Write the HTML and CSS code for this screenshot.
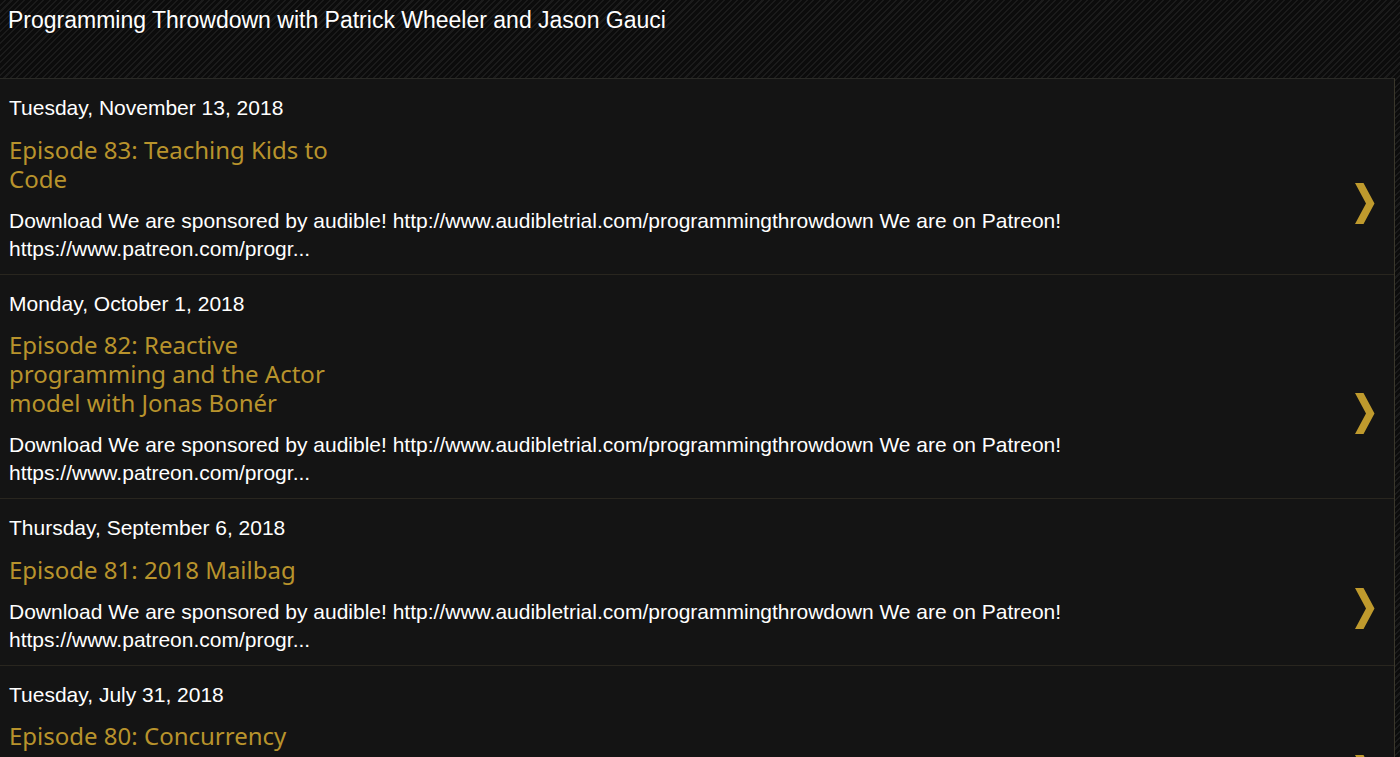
FILE: index.html
```html
<!DOCTYPE html>
<html lang="en">
<head>
<meta charset="utf-8">
<title>Programming Throwdown</title>
<link rel="stylesheet" href="styles.css">
</head>
<body>
<header class="site-header">
  <h1 class="site-title">Programming Throwdown with Patrick Wheeler and Jason Gauci</h1>
</header>
<main class="panel">
  <article class="episode">
    <div class="episode-body">
      <div class="episode-date">Tuesday, November 13, 2018</div>
      <h2 class="episode-title">Episode 83: Teaching Kids to Code</h2>
      <p class="episode-desc">Download We are sponsored by audible! http://www.audibletrial.com/programmingthrowdown We are on Patreon! https://www.patreon.com/progr...</p>
    </div>
    <div class="chevron"><svg width="20" height="41" viewBox="0 0 20 41"><polygon points="0,0 8.5,0 19.5,20.5 8.5,41 0,41 11,20.5" fill="#bf9a2d"/></svg></div>
  </article>
  <article class="episode">
    <div class="episode-body">
      <div class="episode-date">Monday, October 1, 2018</div>
      <h2 class="episode-title">Episode 82: Reactive programming and the Actor model with Jonas Bonér</h2>
      <p class="episode-desc">Download We are sponsored by audible! http://www.audibletrial.com/programmingthrowdown We are on Patreon! https://www.patreon.com/progr...</p>
    </div>
    <div class="chevron"><svg width="20" height="41" viewBox="0 0 20 41"><polygon points="0,0 8.5,0 19.5,20.5 8.5,41 0,41 11,20.5" fill="#bf9a2d"/></svg></div>
  </article>
  <article class="episode">
    <div class="episode-body">
      <div class="episode-date">Thursday, September 6, 2018</div>
      <h2 class="episode-title">Episode 81: 2018 Mailbag</h2>
      <p class="episode-desc">Download We are sponsored by audible! http://www.audibletrial.com/programmingthrowdown We are on Patreon! https://www.patreon.com/progr...</p>
    </div>
    <div class="chevron"><svg width="20" height="41" viewBox="0 0 20 41"><polygon points="0,0 8.5,0 19.5,20.5 8.5,41 0,41 11,20.5" fill="#bf9a2d"/></svg></div>
  </article>
  <article class="episode">
    <div class="episode-body">
      <div class="episode-date">Tuesday, July 31, 2018</div>
      <h2 class="episode-title">Episode 80: Concurrency</h2>
      <p class="episode-desc">Download We are sponsored by audible! http://www.audibletrial.com/programmingthrowdown We are on Patreon! https://www.patreon.com/progr...</p>
    </div>
    <div class="chevron"><svg width="20" height="41" viewBox="0 0 20 41"><polygon points="0,0 8.5,0 19.5,20.5 8.5,41 0,41 11,20.5" fill="#bf9a2d"/></svg></div>
  </article>
</main>
</body>
</html>
```
FILE: styles.css
```css
html, body {
  margin: 0;
  padding: 0;
}
body {
  background-color: #0c0c0c;
  background-image: repeating-linear-gradient(-45deg, #0c0c0c 0px, #0c0c0c 3px, #1b1b1b 3px, #1b1b1b 4.5px);
  font-family: "Liberation Sans", Arial, sans-serif;
  color: #fff;
  overflow: hidden;
}
.site-header {
  height: 78px;
  box-sizing: border-box;
  padding: 7px 8px 0;
}
.site-title {
  margin: 0;
  font-weight: normal;
  font-size: 23px;
  line-height: 26px;
  color: #fff;
}
.panel {
  margin-right: 5px;
  background: #141414;
  border-top: 1px solid #2a2a26;
  border-right: 1px solid #3a372b;
}
.episode {
  display: flex;
  align-items: center;
  padding: 17px 0 11px 9px;
  border-bottom: 1px solid #29261f;
}
.episode-body {
  flex: 1;
  min-width: 0;
}
.episode-date {
  font-size: 21px;
  line-height: 24px;
}
.episode-title {
  margin: 14.5px 0 0;
  max-width: 345px;
  font-family: "Noto Sans", "DejaVu Sans", sans-serif;
  font-weight: normal;
  font-size: 24px;
  line-height: 29px;
  color: #b8932c;
}
.episode-desc {
  margin: 14px 0 0;
  max-width: 1200px;
  font-size: 21px;
  line-height: 28px;
}
.chevron {
  flex: none;
  width: 20px;
  padding: 48px 19px 0 0;
  display: flex;
}
```
